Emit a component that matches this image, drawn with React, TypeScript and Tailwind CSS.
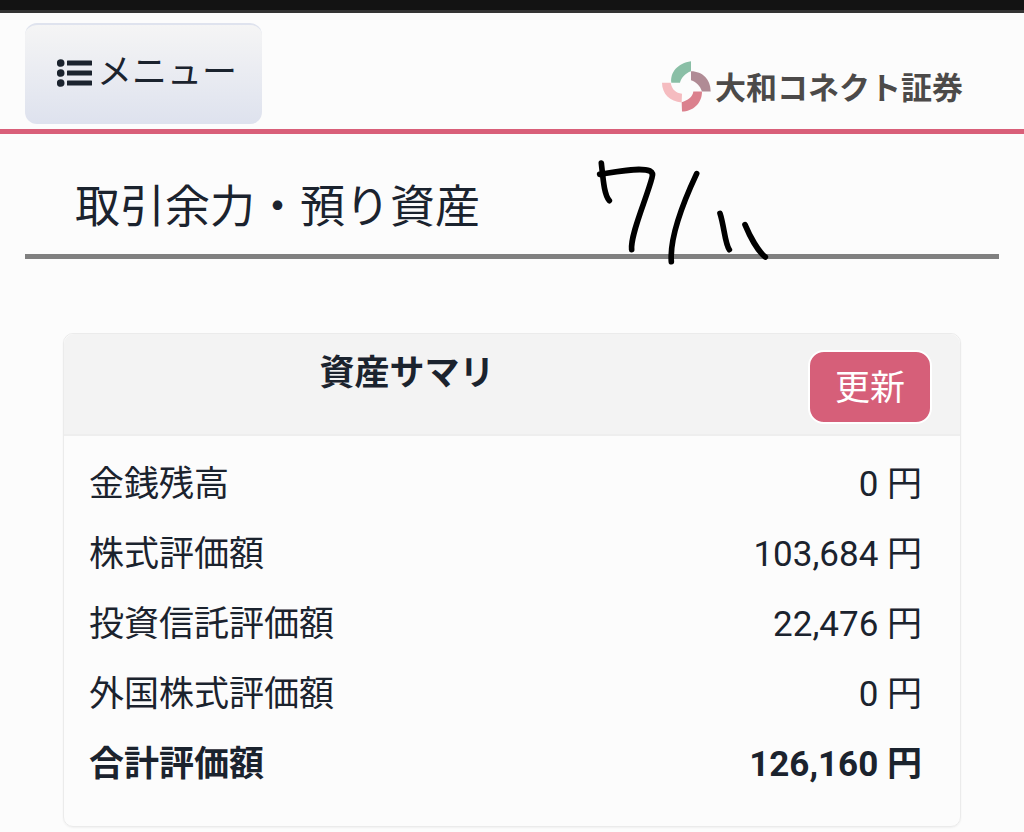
import React from 'react';

interface SummaryRow {
  label: string;
  amount: string;
  total?: boolean;
}

const rows: SummaryRow[] = [
  { label: '金銭残高', amount: '0' },
  { label: '株式評価額', amount: '103,684' },
  { label: '投資信託評価額', amount: '22,476' },
  { label: '外国株式評価額', amount: '0' },
  { label: '合計評価額', amount: '126,160', total: true },
];

function ListIcon() {
  return (
    <svg viewBox="0 0 35 28" className="h-7 w-[35px]" fill="currentColor" aria-hidden="true">
      <circle cx="3.7" cy="4" r="3.8" />
      <circle cx="3.7" cy="14" r="3.8" />
      <circle cx="3.7" cy="24" r="3.8" />
      <rect x="10" y="1.5" width="25" height="5" rx="0.6" />
      <rect x="10" y="11.5" width="25" height="5" rx="0.6" />
      <rect x="10" y="21.5" width="25" height="5" rx="0.6" />
    </svg>
  );
}

function Logo() {
  return (
    <a href="#" className="flex items-center gap-1 text-[#4c4a49]">
      <svg viewBox="38 62 147 152" className="h-[51px] w-[49px]" aria-hidden="true">
        <path fill="#8abfa6" d="M125 62C85 68 62 95 66 127L92 127C95 112 108 98 125 92Z" />
        <path fill="#b08b95" d="M125 92C160 92 185 118 184 153L158 153C152 135 142 125 125 119Z" />
        <path fill="#db808d" d="M158 153C158 190 130 213 98 213L97 185C115 180 130 170 132 153Z" />
        <path fill="#f5bcc0" d="M38 127L64 127C68 148 80 158 98 160L97 186C62 184 38 160 38 127Z" />
      </svg>
      <span className="pt-1 text-[31px] leading-10 font-bold">大和コネクト証券</span>
    </a>
  );
}

// handwritten date drawn over the heading
function DateNote() {
  return (
    <svg
      viewBox="0 0 660 390"
      className="absolute top-[11px] left-[580px] h-[130px] w-[220px]"
      fill="none"
      stroke="#000"
      strokeWidth="17"
      strokeLinecap="round"
      strokeLinejoin="round"
      role="img"
      aria-label="7/11"
    >
      <path d="M64 54C70 110 73 150 88 167" />
      <path d="M59 88C110 80 180 66 210 78Q221 84 216 98C200 160 150 270 155 314" />
      <path d="M350 86C320 150 268 270 274 350" />
      <path d="M420 205C432 240 435 298 448 314" />
      <path d="M495 239C510 275 535 320 556 336" />
    </svg>
  );
}

export default function App() {
  return (
    <div className="min-h-screen bg-[#fcfcfc] font-[Roboto,'Noto_Sans_CJK_JP',sans-serif] text-[#1b232e]">
      <div className="h-[13px] border-b-[3px] border-[#333] bg-[#131313]" />

      <header className="flex items-start justify-between border-b-[5px] border-[#d95f79] px-[25px] pt-[10px] pb-[5px]">
        <button
          type="button"
          className="flex h-[101px] items-center gap-[5px] rounded-xl border-t-2 border-[#dfe3ee] bg-linear-to-b from-[#f5f5f5] to-[#dee2ee] pr-[25px] pb-1 pl-8 text-[35px] leading-[52px]"
        >
          <ListIcon />
          メニュー
        </button>
        <div className="pt-[38px] pr-9">
          <Logo />
        </div>
      </header>

      <section className="relative px-[25px]">
        <h1 className="border-b-[5px] border-[#808080] px-[50px] pt-[42px] pb-[14px] text-[45px] leading-[64px]">
          取引余力・預り資産
        </h1>
        <DateNote />
      </section>

      <main className="px-[63px] pt-[74px]">
        <section className="rounded-[10px] border border-[#ebebeb] shadow-xs">
          <div className="grid grid-cols-4 rounded-t-[10px] border-b-2 border-[#eeeeee] bg-[#f3f3f3] px-7 pt-4 pb-[10px]">
            <h2 className="col-span-3 pt-[2px] text-center text-[35px] leading-[44px] font-bold">資産サマリ</h2>
            <button
              type="button"
              className="justify-self-end rounded-2xl border-2 border-white bg-[#d65f79] px-[25px] pt-[11px] pb-[7px] text-[35px] leading-[52px] text-white"
            >
              更新
            </button>
          </div>
          <div className="pt-[14px] pr-[38px] pb-[26px] pl-[25px]">
            <table className="w-full text-[35px] leading-[70px]">
              <tbody>
                {rows.map((row) => (
                  <tr key={row.label}>
                    <th scope="row" className={row.total ? 'p-0 text-left font-bold' : 'p-0 text-left font-normal'}>
                      {row.label}
                    </th>
                    <td className={row.total ? 'p-0 text-right font-bold' : 'p-0 text-right'}>{row.amount} 円</td>
                  </tr>
                ))}
              </tbody>
            </table>
          </div>
        </section>
      </main>
    </div>
  );
}
